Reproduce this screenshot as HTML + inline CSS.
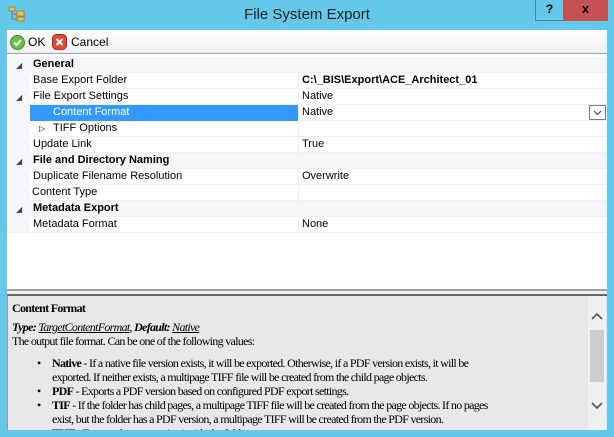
<!DOCTYPE html>
<html><head><style>
*{margin:0;padding:0;box-sizing:border-box}
body{width:614px;height:437px;background:#63c8ea;position:relative;overflow:hidden;font-family:"Liberation Sans",sans-serif;font-size:11px;color:#000}
.a{position:absolute}
.row{position:absolute;left:30px;width:576px;height:16px;border-bottom:1px solid #eef0f5}
.n{position:absolute;left:3px;top:1px;white-space:nowrap}
.v{position:absolute;left:272px;top:1px;white-space:nowrap}
.cat{background:#f3f6fa;font-weight:bold}
.tri{position:absolute;left:16px;font-size:8px;color:#444}
.desc{font-family:"Liberation Serif",serif;font-size:12px;line-height:14px;letter-spacing:-0.7px;white-space:nowrap}
.li{position:relative}
.li span.b{position:absolute;left:-15px}
</style></head><body>
<svg class="a" style="left:8px;top:6px" width="18" height="16"><rect x="1" y="1" width="6" height="4" fill="#e8c060" stroke="#a07820" stroke-width=".8"/><rect x="9" y="5" width="7" height="5" fill="#e8c060" stroke="#a07820" stroke-width=".8"/><rect x="9" y="11" width="7" height="4" fill="#e8c060" stroke="#a07820" stroke-width=".8"/><path d="M4 5v8h5M4 8h5" stroke="#777" fill="none"/></svg>
<div class="a" style="left:0;width:614px;top:6px;text-align:center;font-size:15px;color:#222">File System Export</div>
<div class="a" style="left:535px;top:0;width:29px;height:21px;border:1px solid #3a8aa8;border-top:none;text-align:center;font-weight:bold;font-size:12px;line-height:18px">?</div>
<div class="a" style="left:563px;top:0;width:45px;height:21px;background:#c75050;text-align:center;font-weight:bold;font-size:13px;line-height:18px">x</div>
<div class="a" style="left:7px;top:30px;width:600px;height:400px;background:#fff"></div>
<div class="a" style="left:7px;top:30px;width:600px;height:24px;background:linear-gradient(#fff,#eef0f2);border-bottom:1px solid #a0a0a0"></div>
<svg class="a" style="left:10px;top:35px" width="15" height="15"><circle cx="7.5" cy="7.5" r="7" fill="#6cc04a" stroke="#3a8a2a"/><path d="M4 7.5l2.5 2.5 4.5-5" stroke="#fff" stroke-width="2" fill="none"/></svg>
<div class="a" style="left:28px;top:35px;font-size:12px">OK</div>
<svg class="a" style="left:52px;top:34px" width="15" height="16"><rect x=".5" y=".5" width="14" height="15" rx="4" fill="#e04a3a" stroke="#a02a20"/><path d="M4.5 5l6 6M10.5 5l-6 6" stroke="#fff" stroke-width="2"/></svg>
<div class="a" style="left:71px;top:35px;font-size:12px">Cancel</div>
<div class="a" style="left:7px;top:56px;width:23px;height:177px;background:#f3f6fa"></div>

<div class="row cat" style="top:57px"><span class="n">General</span></div>
<span class="a tri" style="top:61px">◢</span>
<div class="row" style="top:73px"><span class="n">Base Export Folder</span><span class="v" style="font-weight:bold">C:\_BIS\Export\ACE_Architect_01</span></div>
<div class="row" style="top:89px"><span class="n">File Export Settings</span><span class="v">Native</span></div>
<span class="a tri" style="top:93px">◢</span>
<div class="row" style="top:105px;background:none"><span class="a" style="left:0;top:0;width:268px;height:16px;background:#3399ff"></span><span class="n" style="left:23px;color:#fff">Content Format</span><span class="v">Native</span><span class="a" style="left:559px;top:0;width:17px;height:15px;border:1px solid #7a7a7a;background:#fff"><svg width="15" height="13"><path d="M4 5l3.5 3.5L11 5" stroke="#444" fill="none" stroke-width="1.2"/></svg></span></div>
<div class="row" style="top:121px"><span class="n" style="left:9px;font-size:8px;top:3px">▷</span><span class="n" style="left:23px">TIFF Options</span></div>
<div class="row" style="top:137px"><span class="n">Update Link</span><span class="v">True</span></div>
<div class="row cat" style="top:153px"><span class="n">File and Directory Naming</span></div>
<span class="a tri" style="top:157px">◢</span>
<div class="row" style="top:169px"><span class="n">Duplicate Filename Resolution</span><span class="v">Overwrite</span></div>
<div class="row" style="top:185px"><span class="n" style="left:2px">Content Type</span></div>
<div class="row cat" style="top:201px"><span class="n">Metadata Export</span></div>
<span class="a tri" style="top:205px">◢</span>
<div class="row" style="top:217px"><span class="n">Metadata Format</span><span class="v">None</span></div>
<div class="a" style="left:298px;top:73px;width:1px;height:160px;background:#eef0f5"></div>
<div class="a" style="left:7px;top:289px;width:600px;height:2px;background:#a0a0a0"></div>
<div class="a" style="left:7px;top:291px;width:600px;height:3px;background:#f0f0f0"></div>
<div class="a desc" style="left:7px;top:294px;width:600px;height:136px;background:#e8e8e8;border-top:2px solid #666;border-left:1px solid #999;overflow:hidden">
<div style="padding:5px 0 0 4px">
<div style="font-weight:bold;margin-bottom:5px">Content Format</div>
<div><b><i>Type: </i></b><i><u>TargetContentFormat</u></i>, <b><i>Default: </i></b><i><u>Native</u></i></div>
<div>The output file format. Can be one of the following values:</div>
<div style="position:relative;padding-left:40px;margin-top:8px">
<div class="li"><span class="b">•</span><b>Native</b> - If a native file version exists, it will be exported. Otherwise, if a PDF version exists, it will be<br>exported. If neither exists, a multipage TIFF file will be created from the child page objects.</div>
<div class="li"><span class="b">•</span><b>PDF</b> - Exports a PDF version based on configured PDF export settings.</div>
<div class="li"><span class="b">•</span><b>TIF</b> - If the folder has child pages, a multipage TIFF file will be created from the page objects. If no pages<br>exist, but the folder has a PDF version, a multipage TIFF will be created from the PDF version.</div>
<div class="li"><span class="b">•</span><b>TXT</b> - Exports the text version inside the folder.</div>
</div></div>
<div class="a" style="left:580px;top:0;width:18px;height:134px;background:#f0f0f0"></div>
<div class="a" style="left:582px;top:34px;width:14px;height:52px;background:#cdcdcd"></div>
<svg class="a" style="left:582px;top:16px" width="14" height="10"><path d="M2 7l5-5 5 5" stroke="#555" stroke-width="1.6" fill="none"/></svg>
<svg class="a" style="left:582px;top:104px" width="14" height="10"><path d="M2 3l5 5 5-5" stroke="#555" stroke-width="1.6" fill="none"/></svg>
</div>
</body></html>
